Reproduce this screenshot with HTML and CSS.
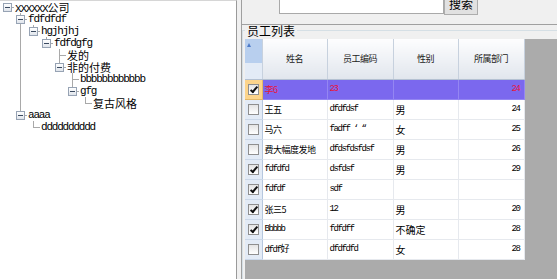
FILE: index.html
```html
<!DOCTYPE html>
<html lang="zh-CN">
<head>
    <meta charset="UTF-8">
    <title>员工列表</title>
    <link rel="stylesheet" href="styles.css">
</head>
<body>
    <div class="tree-pane">
        <ul class="tree">
            <li class="node"><span class="tc stub"><span class="tgl"></span></span><span class="label">XXXXXX<span class="zh">公司</span></span></li>
            <li class="node"><span class="tc"></span><span class="tc tee"><span class="tgl"></span></span><span class="label">fdfdfdf</span></li>
            <li class="node"><span class="tc"></span><span class="tc pipe"></span><span class="tc ell"><span class="tgl"></span></span><span class="label">hgjhjhj</span></li>
            <li class="node"><span class="tc"></span><span class="tc pipe"></span><span class="tc"></span><span class="tc ell"><span class="tgl"></span></span><span class="label">fdfdgfg</span></li>
            <li class="node"><span class="tc"></span><span class="tc pipe"></span><span class="tc"></span><span class="tc"></span><span class="tc tee"></span><span class="label zh">发的</span></li>
            <li class="node"><span class="tc"></span><span class="tc pipe"></span><span class="tc"></span><span class="tc"></span><span class="tc ell"><span class="tgl"></span></span><span class="label zh">非的付费</span></li>
            <li class="node"><span class="tc"></span><span class="tc pipe"></span><span class="tc"></span><span class="tc"></span><span class="tc"></span><span class="tc tee"></span><span class="label">bbbbbbbbbbbb</span></li>
            <li class="node"><span class="tc"></span><span class="tc pipe"></span><span class="tc"></span><span class="tc"></span><span class="tc"></span><span class="tc ell"><span class="tgl"></span></span><span class="label">gfg</span></li>
            <li class="node"><span class="tc"></span><span class="tc pipe"></span><span class="tc"></span><span class="tc"></span><span class="tc"></span><span class="tc"></span><span class="tc ell"></span><span class="label zh">复古风格</span></li>
            <li class="node"><span class="tc"></span><span class="tc ell"><span class="tgl"></span></span><span class="label">aaaa</span></li>
            <li class="node"><span class="tc"></span><span class="tc"></span><span class="tc ell"></span><span class="label">dddddddddd</span></li>
        </ul>
    </div>
    <div class="splitter"></div>
    <div class="main-pane">
        <div class="search-bar">
            <input type="text" class="search-input">
            <button type="button" class="search-btn">搜索</button>
        </div>
        <fieldset class="group">
            <legend>员工列表</legend>
            <div class="grid">
                <table>
                    <colgroup>
                        <col class="c-sel"><col class="c-name"><col class="c-code"><col class="c-sex"><col class="c-dept">
                    </colgroup>
                    <thead>
                        <tr>
                            <th class="sel"><span class="sort"></span></th>
                            <th>姓名</th>
                            <th>员工编码</th>
                            <th>性别</th>
                            <th>所属部门</th>
                        </tr>
                    </thead>
                    <tbody>
                        <tr class="current">
                            <td class="sel"><span class="cb on"></span></td>
                            <td>李6</td>
                            <td class="en">23</td>
                            <td class="sex"></td>
                            <td class="en num">24</td>
                        </tr>
                        <tr>
                            <td class="sel"><span class="cb"></span></td>
                            <td>王五</td>
                            <td class="en">dfdfdsf</td>
                            <td class="sex">男</td>
                            <td class="en num">24</td>
                        </tr>
                        <tr>
                            <td class="sel"><span class="cb"></span></td>
                            <td>马六</td>
                            <td class="en">fadff ‘ “</td>
                            <td class="sex">女</td>
                            <td class="en num">25</td>
                        </tr>
                        <tr>
                            <td class="sel"><span class="cb"></span></td>
                            <td>费大幅度发地</td>
                            <td class="en">dfdsfdsfdsf</td>
                            <td class="sex">男</td>
                            <td class="en num">26</td>
                        </tr>
                        <tr>
                            <td class="sel"><span class="cb on"></span></td>
                            <td class="en">fdfdfd</td>
                            <td class="en">dsfdsf</td>
                            <td class="sex">男</td>
                            <td class="en num">29</td>
                        </tr>
                        <tr>
                            <td class="sel"><span class="cb on"></span></td>
                            <td class="en">fdfdf</td>
                            <td class="en">sdf</td>
                            <td class="sex"></td>
                            <td class="en num"></td>
                        </tr>
                        <tr>
                            <td class="sel"><span class="cb on"></span></td>
                            <td>张三5</td>
                            <td class="en">12</td>
                            <td class="sex">男</td>
                            <td class="en num">20</td>
                        </tr>
                        <tr>
                            <td class="sel"><span class="cb on"></span></td>
                            <td class="en">Bbbbb</td>
                            <td class="en">fdfdff</td>
                            <td class="sex">不确定</td>
                            <td class="en num">28</td>
                        </tr>
                        <tr>
                            <td class="sel"><span class="cb"></span></td>
                            <td class="en">dfdf<span class="zh">好</span></td>
                            <td class="en">dfdfdfd</td>
                            <td class="sex">女</td>
                            <td class="en num">28</td>
                        </tr>
                    </tbody>
                </table>
            </div>
        </fieldset>
    </div>
</body>
</html>
```

FILE: styles.css
```css
:root {
    --line-color: #a9a9a9;
    --panel-color: #f0f0f0;
    --border-color: #a0a0a0;
    --workspace-color: #ababab;
    --row-border: #e6e9ee;
    --selector-color: #e3ebf6;
}
body {
    margin: 0;
    height: 279px;
    display: flex;
    overflow: hidden;
    background-color: var(--panel-color);
    font-family: "Noto Sans CJK SC", sans-serif;
    color: #000;
}

/* tree */
.tree-pane {
    width: 237px;
    flex: none;
    box-sizing: border-box;
    background-color: #fff;
    border-top: 1px solid #d6d6d6;
    border-right: 1px solid #9a9a9a;
}
.tree {
    list-style: none;
    margin: 0;
    padding: 0 0 0 1px;
}
.node {
    display: flex;
    align-items: center;
    height: 12px;
}
.tc {
    width: 13px;
    height: 12px;
    flex: none;
    display: flex;
    align-items: center;
    justify-content: center;
}
.pipe {
    background: linear-gradient(var(--line-color), var(--line-color)) 6px 0 / 1px 100% no-repeat;
}
.tee {
    background:
        linear-gradient(var(--line-color), var(--line-color)) 6px 0 / 1px 100% no-repeat,
        linear-gradient(var(--line-color), var(--line-color)) 6px 6px / 7px 1px no-repeat;
}
.ell {
    background:
        linear-gradient(var(--line-color), var(--line-color)) 6px 0 / 1px 7px no-repeat,
        linear-gradient(var(--line-color), var(--line-color)) 6px 6px / 7px 1px no-repeat;
}
.stub {
    background: linear-gradient(var(--line-color), var(--line-color)) 6px 6px / 7px 1px no-repeat;
}
.tgl {
    width: 9px;
    height: 9px;
    box-sizing: border-box;
    border: 1px solid #97a3b4;
    background:
        linear-gradient(#3a4a60, #3a4a60) center / 5px 1px no-repeat,
        linear-gradient(#ffffff, #dfe4eb);
}
.label {
    margin-left: 1px;
    font-family: "Liberation Mono", "Noto Sans CJK SC", monospace;
    font-size: 11px;
    line-height: 12px;
    height: 12px;
    letter-spacing: -1.2px;
    white-space: nowrap;
}
.zh {
    font-family: "Noto Sans CJK SC", sans-serif;
    font-size: 11px;
    line-height: 12px;
    letter-spacing: 0;
}

.splitter {
    width: 4px;
    flex: none;
}

/* right side */
.main-pane {
    flex: 1;
    min-width: 0;
    border-left: 1px solid var(--border-color);
    display: flex;
    flex-direction: column;
}
.search-bar {
    height: 25px;
    flex: none;
    box-sizing: border-box;
    display: flex;
    align-items: flex-end;
    padding: 0 0 9px 37px;
    border-bottom: 1px solid var(--border-color);
    overflow: hidden;
}
.search-input {
    width: 165px;
    height: 21px;
    box-sizing: border-box;
    margin: 0 0 1px;
    padding: 0;
    border: 1px solid #a9a9a9;
    background-color: #fff;
}
.search-btn {
    width: 34px;
    height: 23px;
    box-sizing: border-box;
    margin: 0;
    padding: 0;
    border: 1px solid #adadad;
    background-color: #e1e1e1;
    font-family: "Noto Sans CJK SC", sans-serif;
    font-size: 12px;
    line-height: 12px;
    color: #000;
}
.group {
    flex: 1;
    min-width: 0;
    margin: 0;
    padding: 0 0 0 2px;
    border: 1px solid #d5dfe5;
    border-right: none;
    border-bottom: none;
}
.group legend {
    padding: 0 2px;
    font-size: 12px;
    line-height: 11px;
}
.grid {
    margin-top: 3px;
    height: 250px;
    background-color: var(--workspace-color);
}

/* table */
table {
    border-collapse: collapse;
    table-layout: fixed;
    width: 279px;
}
.c-sel { width: 17px; }
.c-name { width: 65px; }
.c-code { width: 66px; }
.c-sex { width: 65px; }
.c-dept { width: 66px; }
thead tr {
    height: 40px;
}
th {
    padding: 0;
    font-weight: normal;
    font-size: 9px;
    letter-spacing: -0.5px;
    color: #222;
    background: linear-gradient(#fdfdfe, #e1e6ed);
    border-right: 1px solid #c7d1de;
    border-bottom: 1px solid #b4c1d2;
}
th.sel {
    vertical-align: top;
    background: linear-gradient(#b8cfee 0, #b8cfee 24px, #e3ebf6 24px);
}
.sort {
    display: block;
    width: 0;
    height: 0;
    margin: 4px 0 0 2px;
    border-left: 2px solid transparent;
    border-right: 2px solid transparent;
    border-bottom: 4px solid #4d7bc8;
}
tbody tr {
    height: 20px;
}
td {
    padding: 0 2px;
    font-size: 9px;
    letter-spacing: -0.5px;
    white-space: nowrap;
    overflow: hidden;
    background-color: #fff;
    border-right: 1px solid var(--row-border);
    border-bottom: 1px solid var(--row-border);
}
td.en {
    font-family: "Liberation Mono", "Noto Sans CJK SC", monospace;
    font-size: 9px;
    letter-spacing: -1.4px;
}
td.en .zh {
    font-size: 9px;
    letter-spacing: -0.5px;
}
td.sex {
    font-size: 10px;
    letter-spacing: 0;
}
td.num {
    text-align: right;
    padding-right: 4px;
}
td.sel {
    padding: 0;
    background-color: var(--selector-color);
    border-right: 1px solid #b6c7de;
    border-bottom: 1px solid #cbd8e9;
}
.cb {
    display: block;
    position: relative;
    width: 11px;
    height: 11px;
    margin: 0 auto;
    box-sizing: border-box;
    border: 1px solid #8f8f8f;
    background: linear-gradient(#e4e4e4, #ffffff);
}
.cb.on::after {
    content: '';
    position: absolute;
    left: 3px;
    top: 0;
    width: 2px;
    height: 6px;
    border: solid #111;
    border-width: 0 2px 2px 0;
    transform: rotate(40deg);
}
tr.current td {
    background-color: #7b68ee;
    color: #e8163c;
    border-color: #9486f2;
}
tr.current td.sel {
    background-color: #fcd48b;
    border-color: #e3b866;
}
```
